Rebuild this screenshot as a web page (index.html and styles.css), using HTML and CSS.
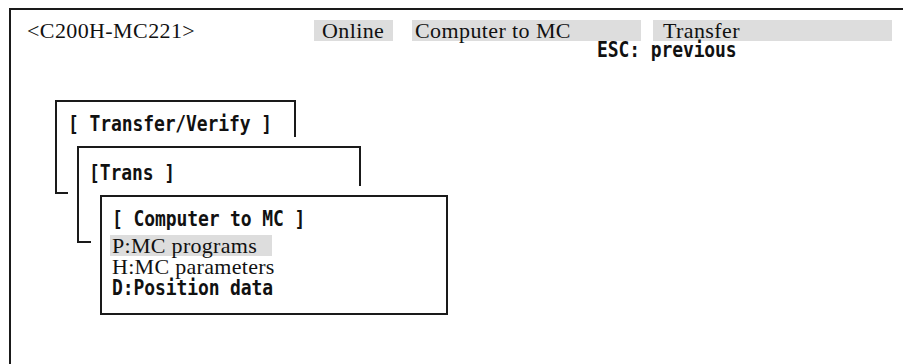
FILE: index.html
```html
<!DOCTYPE html>
<html>
<head>
<meta charset="utf-8">
<link rel="stylesheet" href="styles.css">
</head>
<body>
<div class="screen">
  <div class="header">
    <div class="title">&lt;C200H-MC221&gt;</div>
    <div class="field f-online">Online</div>
    <div class="field f-dir">Computer to MC</div>
    <div class="field f-mode">Transfer</div>
  </div>
  <div class="esc"><span class="tall">ESC: previous</span></div>
  <div class="desk">
    <div class="win win1">
      <div class="mono"><span class="tall">[ Transfer/Verify ]</span></div>
    </div>
    <div class="win win2">
      <div class="mono"><span class="tall">[Trans ]</span></div>
    </div>
    <div class="win win3">
      <div class="mono"><span class="tall">[ Computer to MC ]</span></div>
      <div class="item sel">P:MC programs</div>
      <div class="item">H:MC parameters</div>
      <div class="mono last"><span class="tall">D:Position data</span></div>
    </div>
  </div>
</div>
</body>
</html>
```
FILE: styles.css
```css
html, body {
  margin: 0;
  padding: 0;
  background: #fff;
  color: #111;
}
body {
  width: 903px;
  height: 364px;
  overflow: hidden;
}
.screen {
  position: relative;
  margin: 8px 0 0 9px;
  height: 356px;
  border-top: 2px solid #1a1a1a;
  border-left: 2px solid #1a1a1a;
  padding: 10px 0 0 16px;
  box-sizing: border-box;
  font-family: "Liberation Serif", serif;
}
.header {
  display: flex;
  align-items: flex-start;
  font-size: 22px;
  line-height: 21px;
  letter-spacing: 0.4px;
}
.title {
  flex: 0 0 287px;
}
.field {
  background: #dddddd;
  height: 21px;
  box-sizing: border-box;
}
.f-online { width: 79px; padding-left: 8px; }
.f-dir { width: 229px; padding-left: 3px; margin-left: 19px; }
.f-mode { width: 239px; padding-left: 10px; margin-left: 12px; }
.esc {
  margin-left: 570px;
  font-family: "DejaVu Sans Mono", monospace;
  font-weight: bold;
  font-size: 18px;
  letter-spacing: -0.1px;
  line-height: 20px;
  white-space: pre;
}
.tall {
  display: inline-block;
  transform: scaleY(1.13);
  transform-origin: 0 75%;
}
.desk {
  position: relative;
}
.win {
  position: absolute;
  background: #fff;
  border: 2px solid #1a1a1a;
  box-shadow: 0 0 0 9px #fff;
  box-sizing: border-box;
}
.mono {
  font-family: "DejaVu Sans Mono", monospace;
  font-weight: bold;
  font-size: 18px;
  letter-spacing: -0.1px;
  line-height: 20px;
  white-space: pre;
}
.win1 {
  left: 28px;
  top: 39px;
  width: 241px;
  height: 94px;
  padding: 13px 0 0 11px;
}
.win2 {
  left: 50px;
  top: 85px;
  width: 284px;
  height: 97px;
  padding: 16px 0 0 10px;
}
.win3 {
  left: 73px;
  top: 134px;
  width: 348px;
  height: 120px;
  padding: 13px 0 0 10px;
}
.item {
  font-size: 22px;
  line-height: 21px;
  letter-spacing: 0.3px;
  white-space: pre;
}
.item.sel {
  margin: 5px 0 0 -2px;
  padding-left: 2px;
  width: 160px;
  background: #dddddd;
}
.last {
  margin-top: 2px;
}
```
